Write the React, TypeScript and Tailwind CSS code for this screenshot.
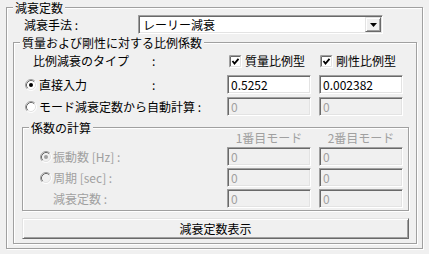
import type { ReactNode } from "react";

const sunken =
  "border border-t-[#a0a0a0] border-l-[#a0a0a0] border-r-white border-b-white shadow-[inset_1px_1px_0_#696969,inset_-1px_-1px_0_#e3e3e3]";

function Group({ label, className, children }: { label: string; className: string; children: ReactNode }) {
  return (
    <div className={`relative shrink-0 border border-[#a0a0a0] shadow-[inset_1px_1px_0_#fff,1px_1px_0_#fff] ${className}`}>
      <span className="absolute left-[6px] -top-[7px] bg-[#f0f0f0] px-[2px] leading-[13px] whitespace-nowrap">{label}</span>
      {children}
    </div>
  );
}

function Radio({ checked, disabled }: { checked?: boolean; disabled?: boolean }) {
  return (
    <svg width="12" height="12" viewBox="0 0 12 12" className="shrink-0">
      <circle cx="6" cy="6" r="5" fill={disabled ? "#f0f0f0" : "#fff"} />
      <path d="M2.11 9.89 A5.5 5.5 0 0 1 9.89 2.11" fill="none" stroke="#a0a0a0" />
      <path d="M9.89 2.11 A5.5 5.5 0 0 1 2.11 9.89" fill="none" stroke="#fff" />
      <path d="M2.82 9.18 A4.5 4.5 0 0 1 9.18 2.82" fill="none" stroke="#696969" />
      <path d="M9.18 2.82 A4.5 4.5 0 0 1 2.82 9.18" fill="none" stroke="#e3e3e3" />
      {checked && <circle cx="6" cy="6" r="2" fill={disabled ? "#a0a0a0" : "#000"} />}
    </svg>
  );
}

function Check() {
  return (
    <svg width="13" height="13" viewBox="0 0 13 13" className="shrink-0">
      <rect x="0" y="0" width="13" height="13" fill="#fff" />
      <path d="M0.5 12.5 V0.5 H12.5" fill="none" stroke="#a0a0a0" />
      <path d="M1.5 11.5 V1.5 H11.5" fill="none" stroke="#696969" />
      <path d="M12.5 0.5 V12.5 H0.5" fill="none" stroke="#fff" />
      <path d="M11.5 1.5 V11.5 H1.5" fill="none" stroke="#e3e3e3" />
      <path d="M3.5 6 L5.5 8.5 L9.5 3.8" fill="none" stroke="#000" strokeWidth="1.8" />
    </svg>
  );
}

function Field({ value, disabled, className = "" }: { value: string; disabled?: boolean; className?: string }) {
  return (
    <div
      className={`${sunken} w-[84px] h-[19px] shrink-0 pl-[3px] flex items-center ${
        disabled ? "bg-[#f0f0f0] text-[#a0a0a0]" : "bg-white"
      } ${className}`}
    >
      {value}
    </div>
  );
}

export default function App() {
  return (
    <div className="w-[429px] h-[254px] overflow-hidden bg-[#f0f0f0] pt-[7px] pl-[6px] text-[12px] leading-[14px] text-black font-['Noto_Sans_CJK_JP','Liberation_Sans',sans-serif]">
      <Group label="減衰定数" className="w-[417px] h-[242px]">
        {/* 減衰手法 */}
        <div className="mt-[7px] flex h-[19px] items-center">
          <span className="w-[131px] shrink-0 pl-[17px]">減衰手法 :</span>
          <div className={`${sunken} flex h-[19px] w-[245px] items-center justify-between bg-white pl-[4px] pr-[1px]`}>
            <span>レーリー減衰</span>
            <div className="flex h-[15px] w-[16px] items-center justify-center border border-t-[#e3e3e3] border-l-[#e3e3e3] border-r-[#696969] border-b-[#696969] bg-[#f0f0f0] shadow-[inset_1px_1px_0_#fff,inset_-1px_-1px_0_#a0a0a0]">
              <svg width="7" height="4" viewBox="0 0 7 4">
                <path d="M0 0 H7 L3.5 4 Z" fill="#000" />
              </svg>
            </div>
          </div>
        </div>

        <Group label="質量および剛性に対する比例係数" className="ml-[6px] mt-[8px] w-[404px] h-[202px]">
          {/* type row */}
          <div className="mt-[11px] flex h-[14px] items-center">
            <div className="flex w-[213px] shrink-0">
              <span className="w-[138px] pl-[19px]">比例減衰のタイプ</span>
              <span>:</span>
            </div>
            <div className="flex w-[92px] shrink-0 items-center gap-[3px] pl-[2px]">
              <Check />
              <span>質量比例型</span>
            </div>
            <div className="flex items-center gap-[3px] pl-[1px]">
              <Check />
              <span>剛性比例型</span>
            </div>
          </div>

          {/* 直接入力 */}
          <div className="mt-[7px] flex h-[19px] items-center">
            <div className="flex w-[213px] shrink-0 items-center pl-[11px]">
              <Radio checked />
              <span className="ml-[2px] w-[113px]">直接入力</span>
              <span>:</span>
            </div>
            <Field value="0.5252" />
            <Field value="0.002382" className="ml-[8px]" />
          </div>

          {/* モード減衰定数から自動計算 */}
          <div className="mt-[3px] flex h-[19px] items-center">
            <div className="flex w-[213px] shrink-0 items-center pl-[11px]">
              <Radio />
              <span className="ml-[2px] whitespace-nowrap">モード減衰定数から自動計算 :</span>
            </div>
            <Field value="0" disabled />
            <Field value="0" disabled className="ml-[8px]" />
          </div>

          <Group label="係数の計算" className="ml-[8px] mt-[11px] w-[387px] h-[84px]">
            <div className="mt-[3px] flex h-[14px] items-center text-[#a0a0a0]">
              <div className="w-[204px] shrink-0" />
              <span className="w-[84px] text-center">1番目モード</span>
              <span className="ml-[8px] w-[84px] text-center">2番目モード</span>
            </div>

            <div className="mt-[2px] flex h-[19px] items-center">
              <div className="flex w-[204px] shrink-0 items-center pl-[17px] text-[#a0a0a0]">
                <Radio checked disabled />
                <span className="ml-[1px]">振動数 [Hz] :</span>
              </div>
              <Field value="0" disabled />
              <Field value="0" disabled className="ml-[8px]" />
            </div>

            <div className="mt-[2px] flex h-[19px] items-center">
              <div className="flex w-[204px] shrink-0 items-center pl-[17px] text-[#a0a0a0]">
                <Radio disabled />
                <span className="ml-[1px]">周期 [sec] :</span>
              </div>
              <Field value="0" disabled />
              <Field value="0" disabled className="ml-[8px]" />
            </div>

            <div className="mt-[2px] flex h-[19px] items-center">
              <div className="flex w-[204px] shrink-0 items-center pl-[30px] text-[#a0a0a0]">
                <span>減衰定数 :</span>
              </div>
              <Field value="0" disabled />
              <Field value="0" disabled className="ml-[8px]" />
            </div>
          </Group>

          <button className="ml-[8px] mt-[7px] flex h-[21px] w-[387px] items-center justify-center border border-t-[#e3e3e3] border-l-[#e3e3e3] border-r-[#696969] border-b-[#696969] bg-[#f0f0f0] shadow-[inset_1px_1px_0_#fff,inset_-1px_-1px_0_#a0a0a0]">
            減衰定数表示
          </button>
        </Group>
      </Group>
    </div>
  );
}
